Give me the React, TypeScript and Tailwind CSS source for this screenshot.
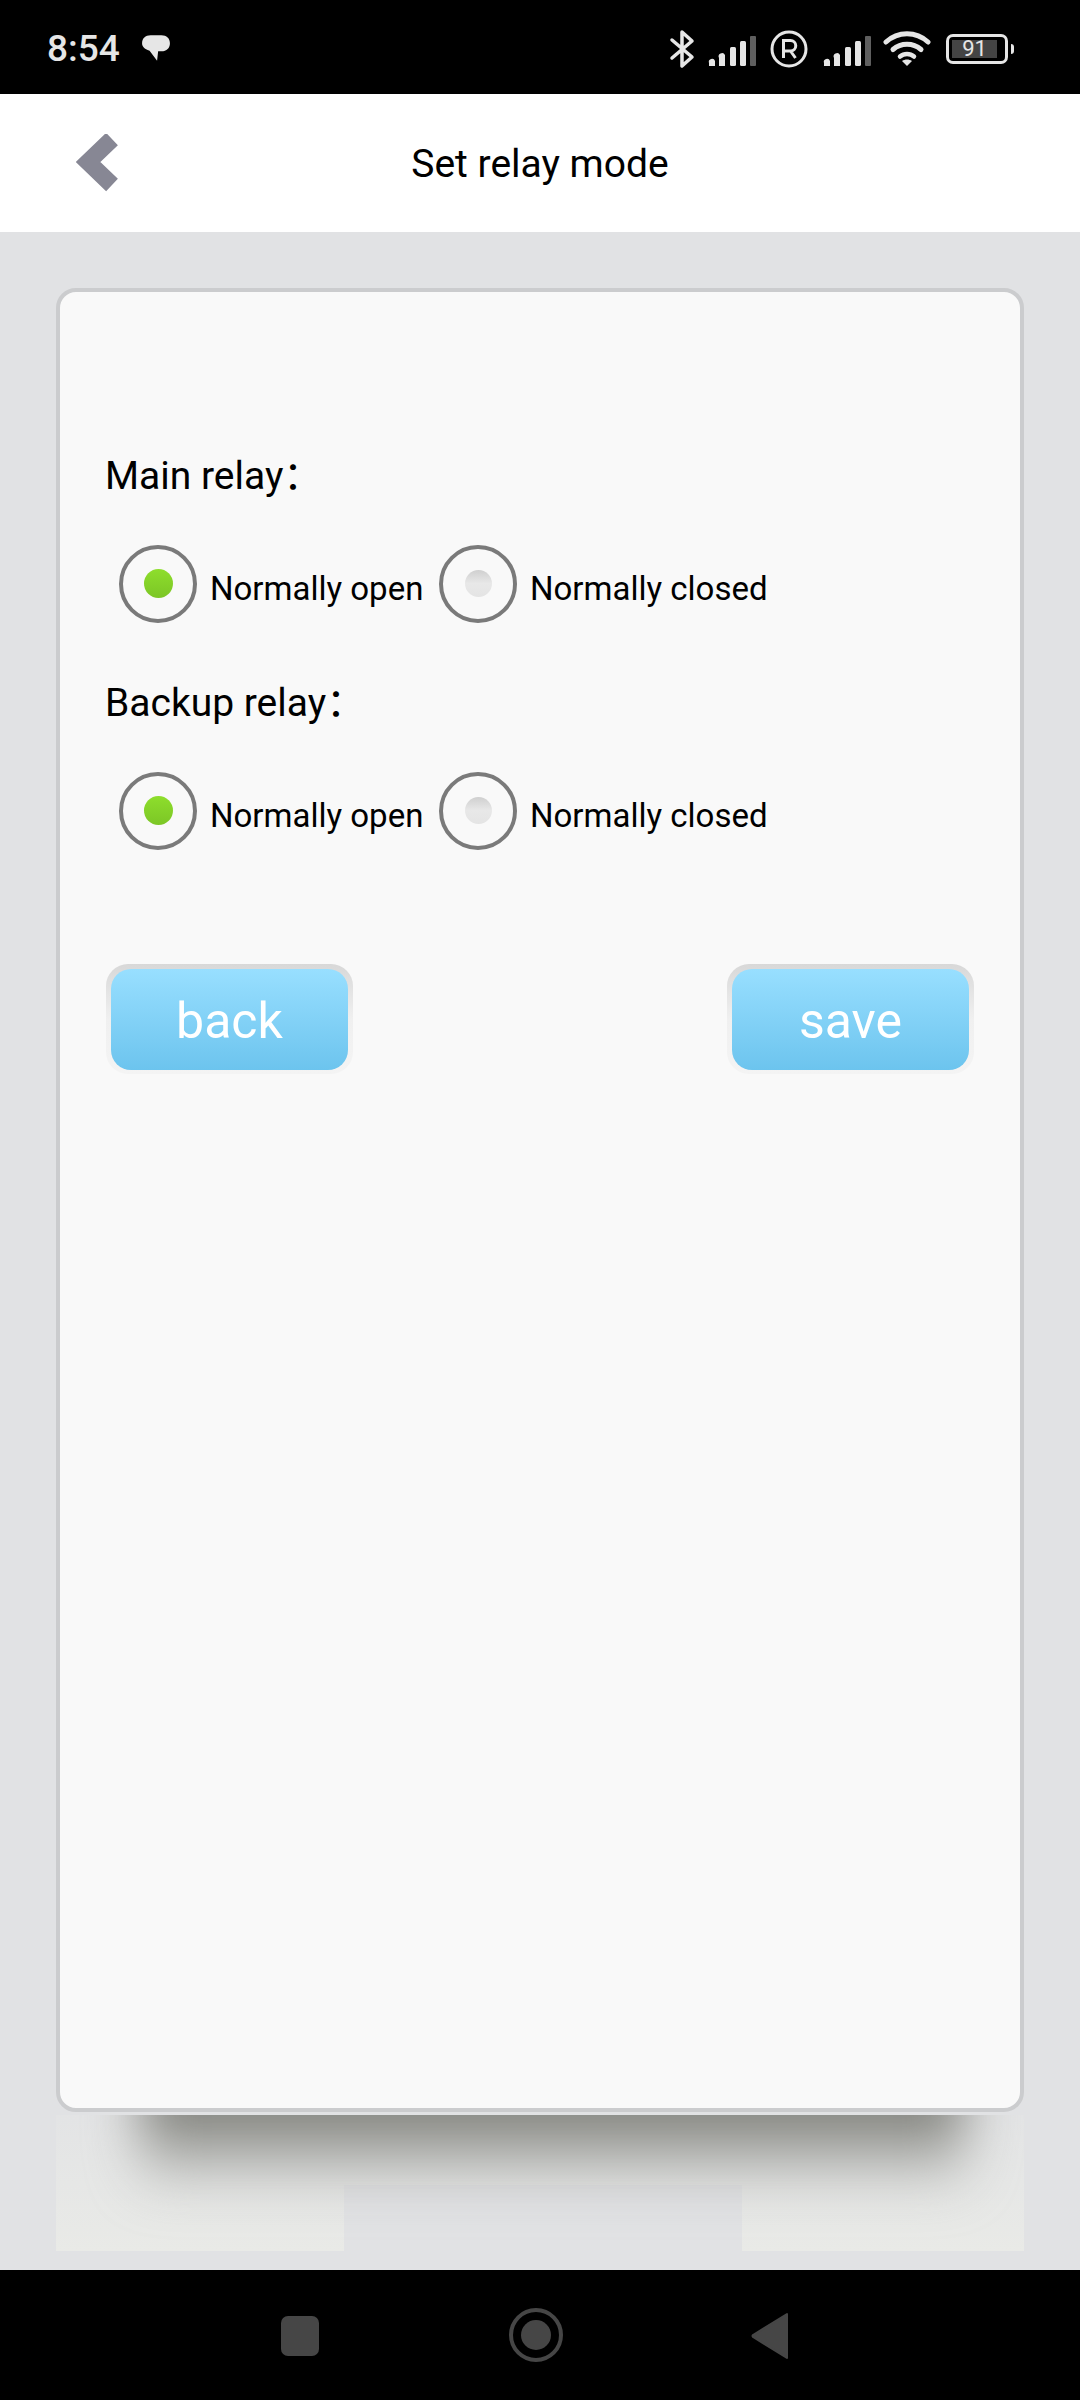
import React from 'react'

const SignalBars = () => (
    <svg width="48" height="32" viewBox="0 0 48 32">
        <path d="M1 31v-3a3 3 0 0 1 6-2v5z" fill="#e6e6e6" />
        <path d="M11 31v-8a3 3 0 0 1 6-3v11z" fill="#e6e6e6" />
        <rect x="22" y="12" width="6" height="19" rx="1.5" fill="#e6e6e6" />
        <rect x="32" y="6" width="6" height="25" rx="1.5" fill="#e6e6e6" />
        <rect x="42" y="1" width="6" height="30" rx="1" fill="#5f5f5f" />
    </svg>
)

const StatusBar = () => (
    <div className="h-[94px] bg-black flex items-center justify-between pl-[47px] pr-[66px] shrink-0">
        <div className="flex items-center">
            <span className="text-[37px] leading-none font-medium text-[#e6e6e6] mt-[2px]">8:54</span>
            <svg className="ml-[21px] mt-[2px]" width="30" height="30" viewBox="0 0 28 28">
                <path d="M9 2h10c5 0 8 3 8 7.500S24 17 19 17h-3l-1 9-7-9.500C3 15 1 12.500 1 9.500 1 5 4 2 9 2z" fill="#e6e6e6" />
            </svg>
        </div>
        <div className="flex items-center h-full">
            <svg width="26" height="40" viewBox="0 0 26 40" className="mt-[4px]">
                <path d="M3 11l20 17-10 9V3l10 9L3 29" fill="none" stroke="#e6e6e6" strokeWidth="3.500" strokeLinejoin="round" strokeLinecap="round" />
            </svg>
            <div className="ml-[13px] mt-[7px]"><SignalBars /></div>
            <svg className="ml-[14px] mt-[4px]" width="38" height="38" viewBox="0 0 38 38">
                <circle cx="19" cy="19" r="17" fill="none" stroke="#e6e6e6" strokeWidth="3" />
                <path d="M13.500 28V10.500h7a5 5 0 0 1 0 10.500h-7M20.500 21l5 7" fill="none" stroke="#e6e6e6" strokeWidth="3" />
            </svg>
            <div className="ml-[15px] mt-[7px]"><SignalBars /></div>
            <svg className="ml-[12px] mt-[3px]" width="48" height="36" viewBox="0 0 48 36">
                <path d="M3 11C15 0 33 0 45 11" fill="none" stroke="#e6e6e6" strokeWidth="5" strokeLinecap="round" />
                <path d="M10 18.500c8-7 20-7 28 0" fill="none" stroke="#e6e6e6" strokeWidth="5" strokeLinecap="round" />
                <path d="M17 25.500c4-3.500 10-3.500 14 0" fill="none" stroke="#e6e6e6" strokeWidth="4.500" strokeLinecap="round" />
                <path d="M24 35l-5-5c3-2 7-2 10 0z" fill="#e6e6e6" />
            </svg>
            <div className="ml-[15px] mt-[4px] flex items-center">
                <div className="w-[62px] h-[30px] rounded-[7px] border-[3px] border-[#e6e6e6] p-[3px] flex">
                    <div className="w-[45px] bg-[#444444] flex items-center justify-center text-[22px] leading-none text-[#e6e6e6]">91</div>
                </div>
                <div className="w-[3px] h-[10px] ml-[3px] rounded-r-sm bg-[#e6e6e6]" />
            </div>
        </div>
    </div>
)

const Radio = ({ on, label }: { on?: boolean; label: string }) => (
    <div className="flex items-center">
        <div className="w-[78px] h-[78px] rounded-full border-[4px] border-[#7a7a7a] flex items-center justify-center shrink-0">
            <div className={on
                ? 'w-[29px] h-[29px] rounded-full bg-gradient-to-b from-[#8ede2c] to-[#7cc626] mb-[2px]'
                : 'w-[27px] h-[27px] rounded-full bg-gradient-to-b from-[#cfcfcf] via-[#e8e8e8] to-[#e4e4e4] mb-[2px]'} />
        </div>
        <span className="ml-[13px] text-[33px] leading-none text-black mt-[8px] whitespace-nowrap">{label}</span>
    </div>
)

const RelayGroup = ({ title }: { title: string }) => (
    <div>
        <div className="text-[39px] leading-[44px] text-black -ml-[1px]">{title}</div>
        <div className="flex mt-[47px] ml-[13px]">
            <div className="w-[320px]"><Radio on label="Normally open" /></div>
            <Radio label="Normally closed" />
        </div>
    </div>
)

const Btn = ({ label }: { label: string }) => (
    <div className="w-[247px] h-[110px] rounded-[22px] bg-gradient-to-b from-[#d8d8d8] via-[#f0f0f0] to-[#f4f4f4] pt-[5px] px-[5px] pb-[4px]">
        <div className="w-full h-full rounded-[20px] bg-gradient-to-b from-[#98dfff] to-[#6cc4ee] flex items-center justify-center text-white text-[50px] leading-none pt-[2px]">
            {label}
        </div>
    </div>
)

export default function App() {
    return (
        <div className="w-[1080px] h-[2400px] flex flex-col bg-[#e1e2e4] overflow-hidden" style={{ fontFamily: 'Roboto, "Noto Sans CJK SC", sans-serif' }}>
            <StatusBar />

            <div className="h-[138px] bg-white relative flex items-center justify-center shrink-0">
                <svg className="absolute left-[76px] top-[40px]" width="42" height="58" viewBox="0 0 42 58">
                    <path d="M36 5L12 28l24 23" fill="none" stroke="#878794" strokeWidth="17" strokeLinejoin="miter" />
                </svg>
                <span className="text-[39px] leading-none text-black mt-[2px]">Set relay mode</span>
            </div>

            <div className="flex-1 px-[56px] pt-[56px]">
                <div className="h-[1824px] rounded-[20px] border-[4px] border-[#cbccce] bg-[#f9f9f9] pl-[46px] pr-[46px] pt-[162px]">
                    <RelayGroup title="Main relay：" />
                    <div className="mt-[58px]"><RelayGroup title="Backup relay：" /></div>
                    <div className="flex justify-between mt-[114px]">
                        <Btn label="back" />
                        <Btn label="save" />
                    </div>
                </div>

                {/* reflection under the card */}
                <div className="h-[136px] mt-[3px] relative overflow-hidden bg-gradient-to-b from-[#e3e4e5] to-[#e9eae7]">
                    <div className="absolute left-[288px] right-[282px] top-[70px] bottom-0 bg-[#e1e2e4]" />
                    <div className="absolute left-[85px] right-[60px] -top-[44px] h-[120px] blur-[26px] bg-gradient-to-b from-[#5f605a] via-[#9a9b96] to-transparent" />
                </div>
            </div>

            <div className="h-[130px] bg-black relative flex items-center justify-center shrink-0">
                <div className="w-[38px] h-[40px] rounded-[7px] bg-[#464646] absolute left-[281px] top-[46px]" />
                <svg className="absolute left-[509px] top-[38px]" width="54" height="54" viewBox="0 0 54 54">
                    <circle cx="27" cy="27" r="25" fill="none" stroke="#464646" strokeWidth="4" />
                    <circle cx="27" cy="27" r="15" fill="#464646" />
                </svg>
                <svg className="absolute left-[751px] top-[42px]" width="38" height="48" viewBox="0 0 38 48">
                    <path d="M36 2v44L2 25a1.500 1.500 0 0 1 0-2z" fill="#464646" stroke="#464646" strokeWidth="2" strokeLinejoin="round" />
                </svg>
            </div>
        </div>
    )
}
